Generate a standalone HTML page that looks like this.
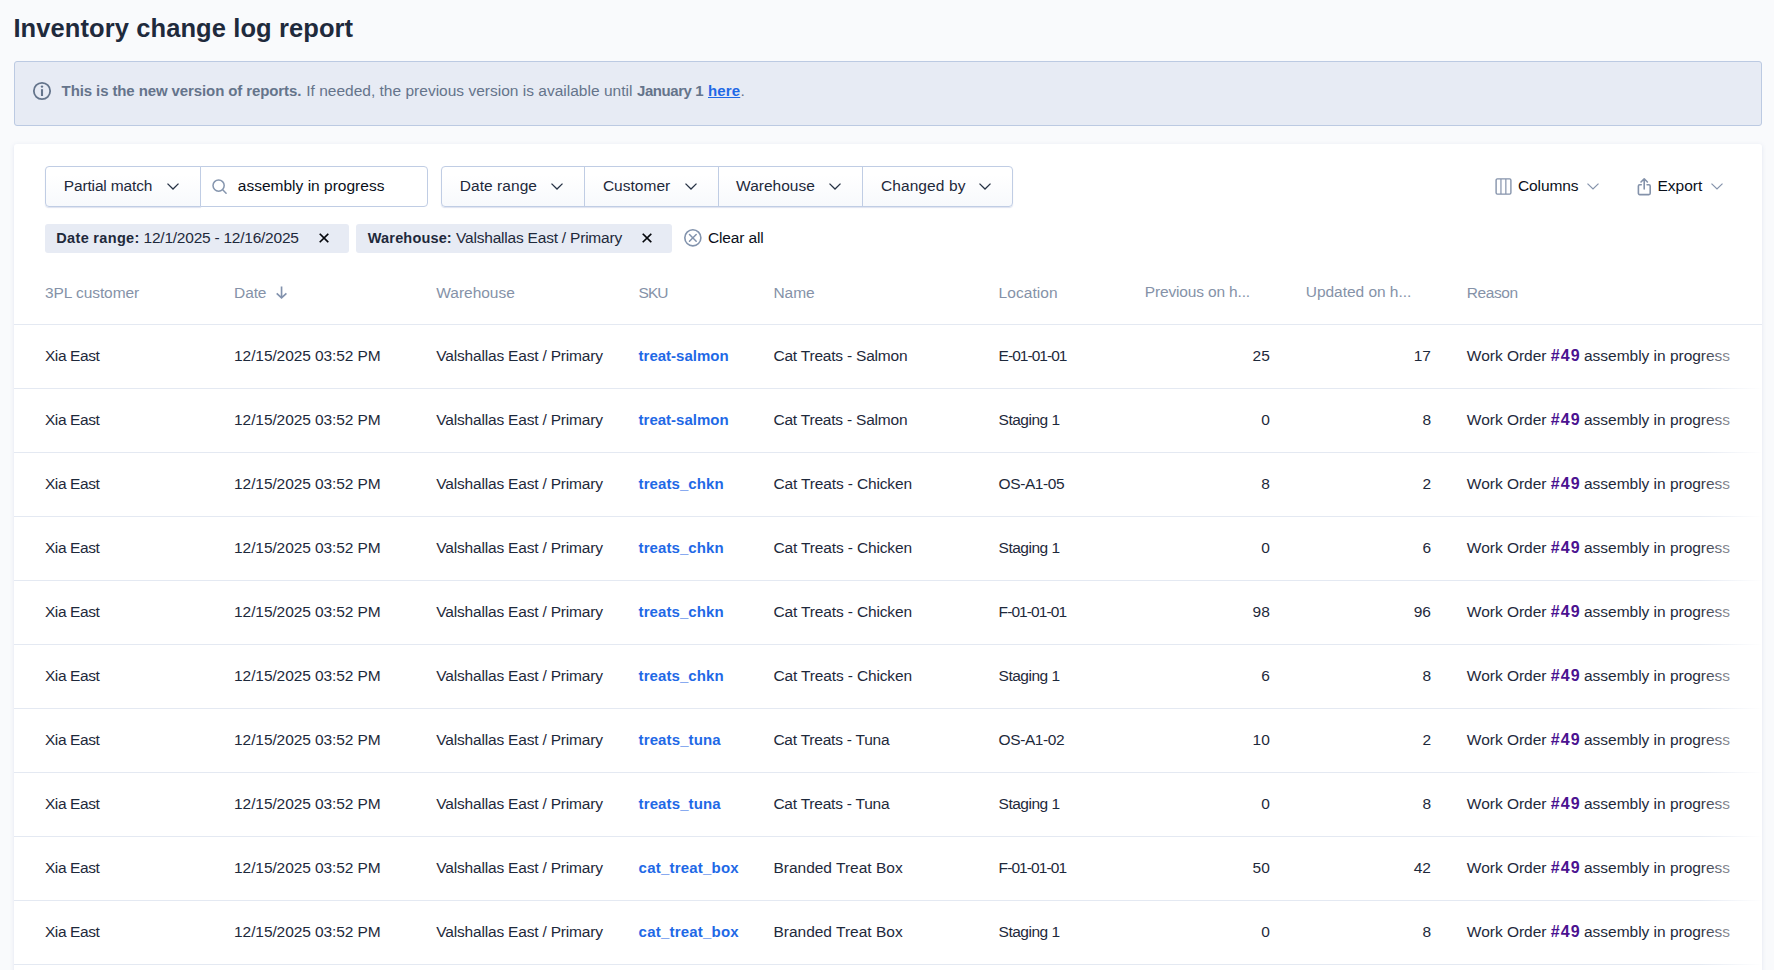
<!DOCTYPE html>
<html lang="en"><head><meta charset="utf-8"><title>Inventory change log report</title>
<style>
html,body{margin:0;padding:0;background:#f9fafc;}
html{overflow:hidden;}
body{width:1774px;height:970px;overflow:hidden;position:relative;background:#f9fafc;font-family:"Liberation Sans",sans-serif;color:#1e293b;}
.page{position:absolute;left:0;top:0;width:1774px;height:970px;overflow:hidden;background:#f9fafc;}
.t{position:absolute;white-space:pre;line-height:20px;height:20px;}
.abs{position:absolute;box-sizing:border-box;}
.banner{left:14px;top:61px;width:1748px;height:65px;background:#e7ebf4;border:1px solid #bccae2;border-radius:3px;}
.card{left:14px;top:144px;width:1748px;height:840px;background:#fff;border-radius:3px;box-shadow:0 1px 4px rgba(100,125,185,0.17);}
.btn{border:1px solid #c0cde4;background:linear-gradient(#ffffff 20%,#f7f9fc);box-shadow:0 1px 1px rgba(120,140,190,0.25);}
.inp{border:1px solid #c0cde4;background:#fff;}
.vline{width:1px;background:#c0cde4;}
.chip{background:#e7ebf4;border-radius:3px;}
.hline{height:1px;left:14px;width:1748px;background:#e4e9f2;}
.fade{left:1698px;top:325px;width:64px;height:645px;background:linear-gradient(to right,rgba(255,255,255,0),#fff);}
svg{position:absolute;overflow:visible;}

</style></head>
<body>
<div class="page">
<div class="abs banner"></div>
<svg style="left:33px;top:82px" width="18" height="18" viewBox="0 0 18 18" fill="none" stroke="#64748b" stroke-width="1.8"><circle cx="9" cy="9" r="8.150"/><path d="M9 7.200v6.800" stroke-width="2.100"/><circle cx="9" cy="4.600" r="1.200" fill="#64748b" stroke="none"/></svg>

<div class="abs card"></div>

<!-- search group -->
<div class="abs btn" style="left:45px;top:166px;width:156px;height:41px;border-radius:4px 0 0 4px;"></div>
<div class="abs inp" style="left:200px;top:166px;width:228px;height:41px;border-radius:0 4px 4px 0;"></div>
<svg style="left:211.900px;top:178.600px" width="16" height="16" viewBox="0 0 16 16" fill="none" stroke="#8696ae" stroke-width="1.500" stroke-linecap="round"><circle cx="6.600" cy="6.600" r="5.600"/><path d="M10.700 10.700L14.100 14.200"/></svg>

<!-- filter group -->
<div class="abs btn" style="left:441px;top:166px;width:572px;height:41px;border-radius:4px;"></div>
<div class="abs vline" style="left:584px;top:167px;height:39px;"></div>
<div class="abs vline" style="left:718px;top:167px;height:39px;"></div>
<div class="abs vline" style="left:862px;top:167px;height:39px;"></div>

<!-- columns / export -->
<svg style="left:1494.500px;top:178px" width="17" height="17" viewBox="0 0 17 17" fill="none" stroke="#8593ab" stroke-width="1.400" stroke-linejoin="round"><rect x="1.100" y="0.900" width="14.800" height="15.200" rx="1.300"/><path d="M5.950 0.900v15.200M10.850 0.900v15.200" stroke-width="1.200"/></svg>
<svg style="left:1637.050px;top:177.400px" width="14.500" height="19" viewBox="0 0 14.500 19" fill="none" stroke="#8492aa" stroke-width="1.600" stroke-linecap="round" stroke-linejoin="round"><path d="M4.300 7.800H2.700a1.300 1.300 0 0 0-1.300 1.300v7.200a1.300 1.300 0 0 0 1.300 1.300h9.200a1.300 1.300 0 0 0 1.300-1.300V9.100a1.300 1.300 0 0 0-1.300-1.300H10.100"/><path d="M7.200 12V1.900M4 5L7.200 1.800 10.400 5"/></svg>

<!-- chevrons -->
<svg style="left:167px;top:183px" width="12" height="7" viewBox="0 0 12 7" fill="none" stroke="#263244" stroke-width="1.300" stroke-linecap="butt" stroke-linejoin="miter"><path d="M0.500 0.600L6 6 11.500 0.600"/></svg>
<svg style="left:551px;top:183px" width="12" height="7" viewBox="0 0 12 7" fill="none" stroke="#263244" stroke-width="1.300" stroke-linecap="butt" stroke-linejoin="miter"><path d="M0.500 0.600L6 6 11.500 0.600"/></svg>
<svg style="left:685.2px;top:183px" width="12" height="7" viewBox="0 0 12 7" fill="none" stroke="#263244" stroke-width="1.300" stroke-linecap="butt" stroke-linejoin="miter"><path d="M0.500 0.600L6 6 11.500 0.600"/></svg>
<svg style="left:829px;top:183px" width="12" height="7" viewBox="0 0 12 7" fill="none" stroke="#263244" stroke-width="1.300" stroke-linecap="butt" stroke-linejoin="miter"><path d="M0.500 0.600L6 6 11.500 0.600"/></svg>
<svg style="left:979.45px;top:183px" width="12" height="7" viewBox="0 0 12 7" fill="none" stroke="#263244" stroke-width="1.300" stroke-linecap="butt" stroke-linejoin="miter"><path d="M0.500 0.600L6 6 11.500 0.600"/></svg>
<svg style="left:1587px;top:183px" width="12" height="7" viewBox="0 0 12 7" fill="none" stroke="#8593ab" stroke-width="1.200" stroke-linecap="butt" stroke-linejoin="miter"><path d="M0.500 0.600L6 6 11.500 0.600"/></svg>
<svg style="left:1711px;top:183px" width="12" height="7" viewBox="0 0 12 7" fill="none" stroke="#8593ab" stroke-width="1.200" stroke-linecap="butt" stroke-linejoin="miter"><path d="M0.500 0.600L6 6 11.500 0.600"/></svg>

<!-- chips -->
<div class="abs chip" style="left:45px;top:224px;width:304px;height:28.500px;"></div>
<div class="abs chip" style="left:356px;top:224px;width:315.800px;height:28.500px;"></div>
<svg style="left:319px;top:233.100px" width="10" height="10" viewBox="0 0 10 10" fill="none" stroke="#05070c" stroke-width="1.650" stroke-linecap="square"><path d="M1.300 1.300L8.700 8.700M8.700 1.300L1.300 8.700"/></svg>
<svg style="left:642px;top:233.100px" width="10" height="10" viewBox="0 0 10 10" fill="none" stroke="#05070c" stroke-width="1.650" stroke-linecap="square"><path d="M1.300 1.300L8.700 8.700M8.700 1.300L1.300 8.700"/></svg>
<svg style="left:684.100px;top:229.050px" width="17.700" height="17.700" viewBox="0 0 17.700 17.700" fill="none" stroke="#8293ad" stroke-width="1.600" stroke-linecap="round"><circle cx="8.850" cy="8.850" r="8.050"/><path d="M5.500 5.500l6.700 6.700M12.200 5.500l-6.700 6.700" stroke-width="1.500"/></svg>

<!-- sort arrow -->
<svg style="left:276px;top:285.500px" width="11" height="14" viewBox="0 0 11 14" fill="none" stroke="#8292ad" stroke-width="1.650" stroke-linecap="butt" stroke-linejoin="miter"><path d="M5.550 0.400V11.600M0.700 7.400L5.550 11.800 10.400 7.400"/></svg>

<!-- table lines -->
<div class="abs hline" style="top:324px;"></div>
<div class="abs hline" style="top:388px;"></div>
<div class="abs hline" style="top:452px;"></div>
<div class="abs hline" style="top:516px;"></div>
<div class="abs hline" style="top:580px;"></div>
<div class="abs hline" style="top:644px;"></div>
<div class="abs hline" style="top:708px;"></div>
<div class="abs hline" style="top:772px;"></div>
<div class="abs hline" style="top:836px;"></div>
<div class="abs hline" style="top:900px;"></div>
<div class="abs hline" style="top:964px;"></div>

<div class="t" style="left:13.40px;top:18.00px;font-size:25.5px;font-weight:700;color:#1f2a3c;letter-spacing:0.095px;">Inventory change log report</div>
<div class="t" style="left:61.60px;top:81.00px;font-size:15px;font-weight:700;color:#65748b;letter-spacing:-0.106px;">This is the new version of reports.</div>
<div class="t" style="left:306.20px;top:81.00px;font-size:15.5px;color:#65748b;letter-spacing:0.010px;">If needed, the previous version is available until</div>
<div class="t" style="left:637.10px;top:81.00px;font-size:15px;font-weight:700;color:#65748b;letter-spacing:-0.456px;">January 1</div>
<div class="t" style="left:708.00px;top:81.00px;font-size:15px;font-weight:700;color:#1f69e6;letter-spacing:0.138px;text-decoration:underline;text-underline-offset:1px;">here</div>
<div class="t" style="left:740.40px;top:81.00px;font-size:15.5px;color:#65748b;">.</div>
<div class="t" style="left:63.80px;top:176.00px;font-size:15.5px;letter-spacing:-0.154px;">Partial match</div>
<div class="t" style="left:237.80px;top:176.00px;font-size:15.5px;color:#0a0f1a;letter-spacing:0.008px;">assembly in progress</div>
<div class="t" style="left:459.80px;top:176.00px;font-size:15.5px;letter-spacing:0.055px;">Date range</div>
<div class="t" style="left:602.90px;top:176.00px;font-size:15.5px;letter-spacing:0.016px;">Customer</div>
<div class="t" style="left:736.10px;top:176.00px;font-size:15.5px;letter-spacing:0.012px;">Warehouse</div>
<div class="t" style="left:880.90px;top:176.00px;font-size:15.5px;letter-spacing:0.101px;">Changed by</div>
<div class="t" style="left:1517.90px;top:176.00px;font-size:15.5px;color:#0a0f1a;letter-spacing:-0.079px;">Columns</div>
<div class="t" style="left:1657.50px;top:176.00px;font-size:15.5px;color:#0a0f1a;">Export</div>
<div class="t" style="left:56.30px;top:228.00px;font-size:14.5px;font-weight:700;letter-spacing:0.322px;">Date range:</div>
<div class="t" style="left:143.60px;top:228.00px;font-size:15.5px;letter-spacing:-0.239px;">12/1/2025 - 12/16/2025</div>
<div class="t" style="left:367.80px;top:228.00px;font-size:14.5px;font-weight:700;letter-spacing:0.161px;">Warehouse:</div>
<div class="t" style="left:456.10px;top:228.00px;font-size:15.5px;letter-spacing:-0.210px;">Valshallas East / Primary</div>
<div class="t" style="left:708.00px;top:228.00px;font-size:15.5px;color:#0a0f1a;letter-spacing:-0.145px;">Clear all</div>
<div class="t" style="left:45.00px;top:283.00px;font-size:15.5px;color:#8592a8;letter-spacing:-0.078px;">3PL customer</div>
<div class="t" style="left:234.10px;top:283.00px;font-size:15.5px;color:#8592a8;letter-spacing:-0.117px;">Date</div>
<div class="t" style="left:436.30px;top:283.00px;font-size:15.5px;color:#8592a8;letter-spacing:-0.025px;">Warehouse</div>
<div class="t" style="left:638.60px;top:283.00px;font-size:15.5px;color:#8592a8;letter-spacing:-1.038px;">SKU</div>
<div class="t" style="left:773.40px;top:283.00px;font-size:15.5px;color:#8592a8;letter-spacing:-0.020px;">Name</div>
<div class="t" style="left:998.60px;top:283.00px;font-size:15.5px;color:#8592a8;letter-spacing:0.056px;">Location</div>
<div class="t" style="left:1144.80px;top:282.00px;font-size:15.5px;color:#8592a8;letter-spacing:-0.160px;">Previous on h...</div>
<div class="t" style="left:1305.80px;top:282.00px;font-size:15.5px;color:#8592a8;letter-spacing:-0.036px;">Updated on h...</div>
<div class="t" style="left:1466.80px;top:283.00px;font-size:15.5px;color:#8592a8;letter-spacing:-0.408px;">Reason</div>
<div class="t" style="left:44.90px;top:346.00px;font-size:15.5px;letter-spacing:-0.391px;">Xia East</div>
<div class="t" style="left:234.10px;top:346.00px;font-size:15.5px;letter-spacing:-0.096px;">12/15/2025 03:52 PM</div>
<div class="t" style="left:436.30px;top:346.00px;font-size:15.5px;letter-spacing:-0.185px;">Valshallas East / Primary</div>
<div class="t" style="left:638.60px;top:346.00px;font-size:15px;font-weight:700;color:#1f69e6;">treat-salmon</div>
<div class="t" style="left:773.40px;top:346.00px;font-size:15.5px;letter-spacing:-0.202px;">Cat Treats - Salmon</div>
<div class="t" style="left:998.60px;top:346.00px;font-size:15.5px;letter-spacing:-0.961px;">E-01-01-01</div>
<div class="t" style="right:504.20px;top:346.00px;font-size:15.5px;">25</div>
<div class="t" style="right:343.00px;top:346.00px;font-size:15.5px;">17</div>
<div class="t" style="left:1466.80px;top:346.00px;font-size:15.5px;letter-spacing:-0.013px;">Work Order</div>
<div class="t" style="left:1550.80px;top:346.00px;font-size:16px;font-weight:700;color:#4a1290;letter-spacing:1.098px;">#49</div>
<div class="t" style="left:1584.00px;top:346.00px;font-size:15.5px;letter-spacing:-0.019px;">assembly in progress</div>
<div class="t" style="left:44.90px;top:410.00px;font-size:15.5px;letter-spacing:-0.391px;">Xia East</div>
<div class="t" style="left:234.10px;top:410.00px;font-size:15.5px;letter-spacing:-0.096px;">12/15/2025 03:52 PM</div>
<div class="t" style="left:436.30px;top:410.00px;font-size:15.5px;letter-spacing:-0.185px;">Valshallas East / Primary</div>
<div class="t" style="left:638.60px;top:410.00px;font-size:15px;font-weight:700;color:#1f69e6;">treat-salmon</div>
<div class="t" style="left:773.40px;top:410.00px;font-size:15.5px;letter-spacing:-0.202px;">Cat Treats - Salmon</div>
<div class="t" style="left:998.60px;top:410.00px;font-size:15.5px;letter-spacing:-0.500px;">Staging 1</div>
<div class="t" style="right:504.20px;top:410.00px;font-size:15.5px;">0</div>
<div class="t" style="right:343.00px;top:410.00px;font-size:15.5px;">8</div>
<div class="t" style="left:1466.80px;top:410.00px;font-size:15.5px;letter-spacing:-0.013px;">Work Order</div>
<div class="t" style="left:1550.80px;top:410.00px;font-size:16px;font-weight:700;color:#4a1290;letter-spacing:1.098px;">#49</div>
<div class="t" style="left:1584.00px;top:410.00px;font-size:15.5px;letter-spacing:-0.019px;">assembly in progress</div>
<div class="t" style="left:44.90px;top:474.00px;font-size:15.5px;letter-spacing:-0.391px;">Xia East</div>
<div class="t" style="left:234.10px;top:474.00px;font-size:15.5px;letter-spacing:-0.096px;">12/15/2025 03:52 PM</div>
<div class="t" style="left:436.30px;top:474.00px;font-size:15.5px;letter-spacing:-0.185px;">Valshallas East / Primary</div>
<div class="t" style="left:638.60px;top:474.00px;font-size:15px;font-weight:700;color:#1f69e6;letter-spacing:0.078px;">treats_chkn</div>
<div class="t" style="left:773.40px;top:474.00px;font-size:15.5px;letter-spacing:-0.136px;">Cat Treats - Chicken</div>
<div class="t" style="left:998.60px;top:474.00px;font-size:15.5px;letter-spacing:-0.417px;">OS-A1-05</div>
<div class="t" style="right:504.20px;top:474.00px;font-size:15.5px;">8</div>
<div class="t" style="right:343.00px;top:474.00px;font-size:15.5px;">2</div>
<div class="t" style="left:1466.80px;top:474.00px;font-size:15.5px;letter-spacing:-0.013px;">Work Order</div>
<div class="t" style="left:1550.80px;top:474.00px;font-size:16px;font-weight:700;color:#4a1290;letter-spacing:1.098px;">#49</div>
<div class="t" style="left:1584.00px;top:474.00px;font-size:15.5px;letter-spacing:-0.019px;">assembly in progress</div>
<div class="t" style="left:44.90px;top:538.00px;font-size:15.5px;letter-spacing:-0.391px;">Xia East</div>
<div class="t" style="left:234.10px;top:538.00px;font-size:15.5px;letter-spacing:-0.096px;">12/15/2025 03:52 PM</div>
<div class="t" style="left:436.30px;top:538.00px;font-size:15.5px;letter-spacing:-0.185px;">Valshallas East / Primary</div>
<div class="t" style="left:638.60px;top:538.00px;font-size:15px;font-weight:700;color:#1f69e6;letter-spacing:0.078px;">treats_chkn</div>
<div class="t" style="left:773.40px;top:538.00px;font-size:15.5px;letter-spacing:-0.136px;">Cat Treats - Chicken</div>
<div class="t" style="left:998.60px;top:538.00px;font-size:15.5px;letter-spacing:-0.500px;">Staging 1</div>
<div class="t" style="right:504.20px;top:538.00px;font-size:15.5px;">0</div>
<div class="t" style="right:343.00px;top:538.00px;font-size:15.5px;">6</div>
<div class="t" style="left:1466.80px;top:538.00px;font-size:15.5px;letter-spacing:-0.013px;">Work Order</div>
<div class="t" style="left:1550.80px;top:538.00px;font-size:16px;font-weight:700;color:#4a1290;letter-spacing:1.098px;">#49</div>
<div class="t" style="left:1584.00px;top:538.00px;font-size:15.5px;letter-spacing:-0.019px;">assembly in progress</div>
<div class="t" style="left:44.90px;top:602.00px;font-size:15.5px;letter-spacing:-0.391px;">Xia East</div>
<div class="t" style="left:234.10px;top:602.00px;font-size:15.5px;letter-spacing:-0.096px;">12/15/2025 03:52 PM</div>
<div class="t" style="left:436.30px;top:602.00px;font-size:15.5px;letter-spacing:-0.185px;">Valshallas East / Primary</div>
<div class="t" style="left:638.60px;top:602.00px;font-size:15px;font-weight:700;color:#1f69e6;letter-spacing:0.078px;">treats_chkn</div>
<div class="t" style="left:773.40px;top:602.00px;font-size:15.5px;letter-spacing:-0.136px;">Cat Treats - Chicken</div>
<div class="t" style="left:998.60px;top:602.00px;font-size:15.5px;letter-spacing:-0.910px;">F-01-01-01</div>
<div class="t" style="right:504.20px;top:602.00px;font-size:15.5px;">98</div>
<div class="t" style="right:343.00px;top:602.00px;font-size:15.5px;">96</div>
<div class="t" style="left:1466.80px;top:602.00px;font-size:15.5px;letter-spacing:-0.013px;">Work Order</div>
<div class="t" style="left:1550.80px;top:602.00px;font-size:16px;font-weight:700;color:#4a1290;letter-spacing:1.098px;">#49</div>
<div class="t" style="left:1584.00px;top:602.00px;font-size:15.5px;letter-spacing:-0.019px;">assembly in progress</div>
<div class="t" style="left:44.90px;top:666.00px;font-size:15.5px;letter-spacing:-0.391px;">Xia East</div>
<div class="t" style="left:234.10px;top:666.00px;font-size:15.5px;letter-spacing:-0.096px;">12/15/2025 03:52 PM</div>
<div class="t" style="left:436.30px;top:666.00px;font-size:15.5px;letter-spacing:-0.185px;">Valshallas East / Primary</div>
<div class="t" style="left:638.60px;top:666.00px;font-size:15px;font-weight:700;color:#1f69e6;letter-spacing:0.078px;">treats_chkn</div>
<div class="t" style="left:773.40px;top:666.00px;font-size:15.5px;letter-spacing:-0.136px;">Cat Treats - Chicken</div>
<div class="t" style="left:998.60px;top:666.00px;font-size:15.5px;letter-spacing:-0.500px;">Staging 1</div>
<div class="t" style="right:504.20px;top:666.00px;font-size:15.5px;">6</div>
<div class="t" style="right:343.00px;top:666.00px;font-size:15.5px;">8</div>
<div class="t" style="left:1466.80px;top:666.00px;font-size:15.5px;letter-spacing:-0.013px;">Work Order</div>
<div class="t" style="left:1550.80px;top:666.00px;font-size:16px;font-weight:700;color:#4a1290;letter-spacing:1.098px;">#49</div>
<div class="t" style="left:1584.00px;top:666.00px;font-size:15.5px;letter-spacing:-0.019px;">assembly in progress</div>
<div class="t" style="left:44.90px;top:730.00px;font-size:15.5px;letter-spacing:-0.391px;">Xia East</div>
<div class="t" style="left:234.10px;top:730.00px;font-size:15.5px;letter-spacing:-0.096px;">12/15/2025 03:52 PM</div>
<div class="t" style="left:436.30px;top:730.00px;font-size:15.5px;letter-spacing:-0.185px;">Valshallas East / Primary</div>
<div class="t" style="left:638.60px;top:730.00px;font-size:15px;font-weight:700;color:#1f69e6;letter-spacing:0.114px;">treats_tuna</div>
<div class="t" style="left:773.40px;top:730.00px;font-size:15.5px;letter-spacing:-0.222px;">Cat Treats - Tuna</div>
<div class="t" style="left:998.60px;top:730.00px;font-size:15.5px;letter-spacing:-0.417px;">OS-A1-02</div>
<div class="t" style="right:504.20px;top:730.00px;font-size:15.5px;">10</div>
<div class="t" style="right:343.00px;top:730.00px;font-size:15.5px;">2</div>
<div class="t" style="left:1466.80px;top:730.00px;font-size:15.5px;letter-spacing:-0.013px;">Work Order</div>
<div class="t" style="left:1550.80px;top:730.00px;font-size:16px;font-weight:700;color:#4a1290;letter-spacing:1.098px;">#49</div>
<div class="t" style="left:1584.00px;top:730.00px;font-size:15.5px;letter-spacing:-0.019px;">assembly in progress</div>
<div class="t" style="left:44.90px;top:794.00px;font-size:15.5px;letter-spacing:-0.391px;">Xia East</div>
<div class="t" style="left:234.10px;top:794.00px;font-size:15.5px;letter-spacing:-0.096px;">12/15/2025 03:52 PM</div>
<div class="t" style="left:436.30px;top:794.00px;font-size:15.5px;letter-spacing:-0.185px;">Valshallas East / Primary</div>
<div class="t" style="left:638.60px;top:794.00px;font-size:15px;font-weight:700;color:#1f69e6;letter-spacing:0.114px;">treats_tuna</div>
<div class="t" style="left:773.40px;top:794.00px;font-size:15.5px;letter-spacing:-0.222px;">Cat Treats - Tuna</div>
<div class="t" style="left:998.60px;top:794.00px;font-size:15.5px;letter-spacing:-0.500px;">Staging 1</div>
<div class="t" style="right:504.20px;top:794.00px;font-size:15.5px;">0</div>
<div class="t" style="right:343.00px;top:794.00px;font-size:15.5px;">8</div>
<div class="t" style="left:1466.80px;top:794.00px;font-size:15.5px;letter-spacing:-0.013px;">Work Order</div>
<div class="t" style="left:1550.80px;top:794.00px;font-size:16px;font-weight:700;color:#4a1290;letter-spacing:1.098px;">#49</div>
<div class="t" style="left:1584.00px;top:794.00px;font-size:15.5px;letter-spacing:-0.019px;">assembly in progress</div>
<div class="t" style="left:44.90px;top:858.00px;font-size:15.5px;letter-spacing:-0.391px;">Xia East</div>
<div class="t" style="left:234.10px;top:858.00px;font-size:15.5px;letter-spacing:-0.096px;">12/15/2025 03:52 PM</div>
<div class="t" style="left:436.30px;top:858.00px;font-size:15.5px;letter-spacing:-0.185px;">Valshallas East / Primary</div>
<div class="t" style="left:638.60px;top:858.00px;font-size:15px;font-weight:700;color:#1f69e6;letter-spacing:0.204px;">cat_treat_box</div>
<div class="t" style="left:773.40px;top:858.00px;font-size:15.5px;">Branded Treat Box</div>
<div class="t" style="left:998.60px;top:858.00px;font-size:15.5px;letter-spacing:-0.910px;">F-01-01-01</div>
<div class="t" style="right:504.20px;top:858.00px;font-size:15.5px;">50</div>
<div class="t" style="right:343.00px;top:858.00px;font-size:15.5px;">42</div>
<div class="t" style="left:1466.80px;top:858.00px;font-size:15.5px;letter-spacing:-0.013px;">Work Order</div>
<div class="t" style="left:1550.80px;top:858.00px;font-size:16px;font-weight:700;color:#4a1290;letter-spacing:1.098px;">#49</div>
<div class="t" style="left:1584.00px;top:858.00px;font-size:15.5px;letter-spacing:-0.019px;">assembly in progress</div>
<div class="t" style="left:44.90px;top:922.00px;font-size:15.5px;letter-spacing:-0.391px;">Xia East</div>
<div class="t" style="left:234.10px;top:922.00px;font-size:15.5px;letter-spacing:-0.096px;">12/15/2025 03:52 PM</div>
<div class="t" style="left:436.30px;top:922.00px;font-size:15.5px;letter-spacing:-0.185px;">Valshallas East / Primary</div>
<div class="t" style="left:638.60px;top:922.00px;font-size:15px;font-weight:700;color:#1f69e6;letter-spacing:0.204px;">cat_treat_box</div>
<div class="t" style="left:773.40px;top:922.00px;font-size:15.5px;">Branded Treat Box</div>
<div class="t" style="left:998.60px;top:922.00px;font-size:15.5px;letter-spacing:-0.500px;">Staging 1</div>
<div class="t" style="right:504.20px;top:922.00px;font-size:15.5px;">0</div>
<div class="t" style="right:343.00px;top:922.00px;font-size:15.5px;">8</div>
<div class="t" style="left:1466.80px;top:922.00px;font-size:15.5px;letter-spacing:-0.013px;">Work Order</div>
<div class="t" style="left:1550.80px;top:922.00px;font-size:16px;font-weight:700;color:#4a1290;letter-spacing:1.098px;">#49</div>
<div class="t" style="left:1584.00px;top:922.00px;font-size:15.5px;letter-spacing:-0.019px;">assembly in progress</div>
<div class="abs fade"></div>
</div>
</body></html>
